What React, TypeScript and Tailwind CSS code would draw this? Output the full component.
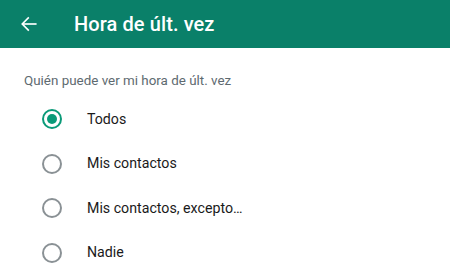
import React, { useState } from 'react';

const options = ['Todos', 'Mis contactos', 'Mis contactos, excepto…', 'Nadie'];

export default function App() {
  const [selected, setSelected] = useState('Todos');

  return (
    <div className="w-[450px] h-[280px] bg-white overflow-hidden" style={{ fontFamily: 'Roboto, "Liberation Sans", sans-serif' }}>
      <div className="h-12 bg-[#0a8069] flex items-center">
        <button className="w-[57px] h-12 flex items-center justify-center text-white">
          <svg width="18" height="18" viewBox="0 0 24 24" fill="none" stroke="currentColor" strokeWidth="2.2" strokeLinecap="square">
            <path d="M21 12H4" />
            <path d="M11 4l-8 8 8 8" />
          </svg>
        </button>
        <h1 className="ml-[17px] text-white text-[20px] font-medium tracking-[0.1px]">Hora de últ. vez</h1>
      </div>

      <div className="pt-[23px] pl-6 text-[13.4px] text-[#5e6a70] leading-5">Quién puede ver mi hora de últ. vez</div>

      <div className="pt-[6px]">
        {options.map((opt) => {
          const active = opt === selected;
          return (
            <label key={opt} className="flex items-center h-[44.5px] cursor-pointer" onClick={() => setSelected(opt)}>
              <span className="w-[87px] flex justify-center pl-[16px]">
                <span
                  className={`w-5 h-5 rounded-full border-2 flex items-center justify-center ${active ? 'border-[#0a9a78]' : 'border-[#8a9195]'}`}
                >
                  {active && <span className="w-[10px] h-[10px] rounded-full bg-[#0a9a78]" />}
                </span>
              </span>
              <span className="text-[14.2px] text-[#1a1a1a]">{opt}</span>
            </label>
          );
        })}
      </div>
    </div>
  );
}
